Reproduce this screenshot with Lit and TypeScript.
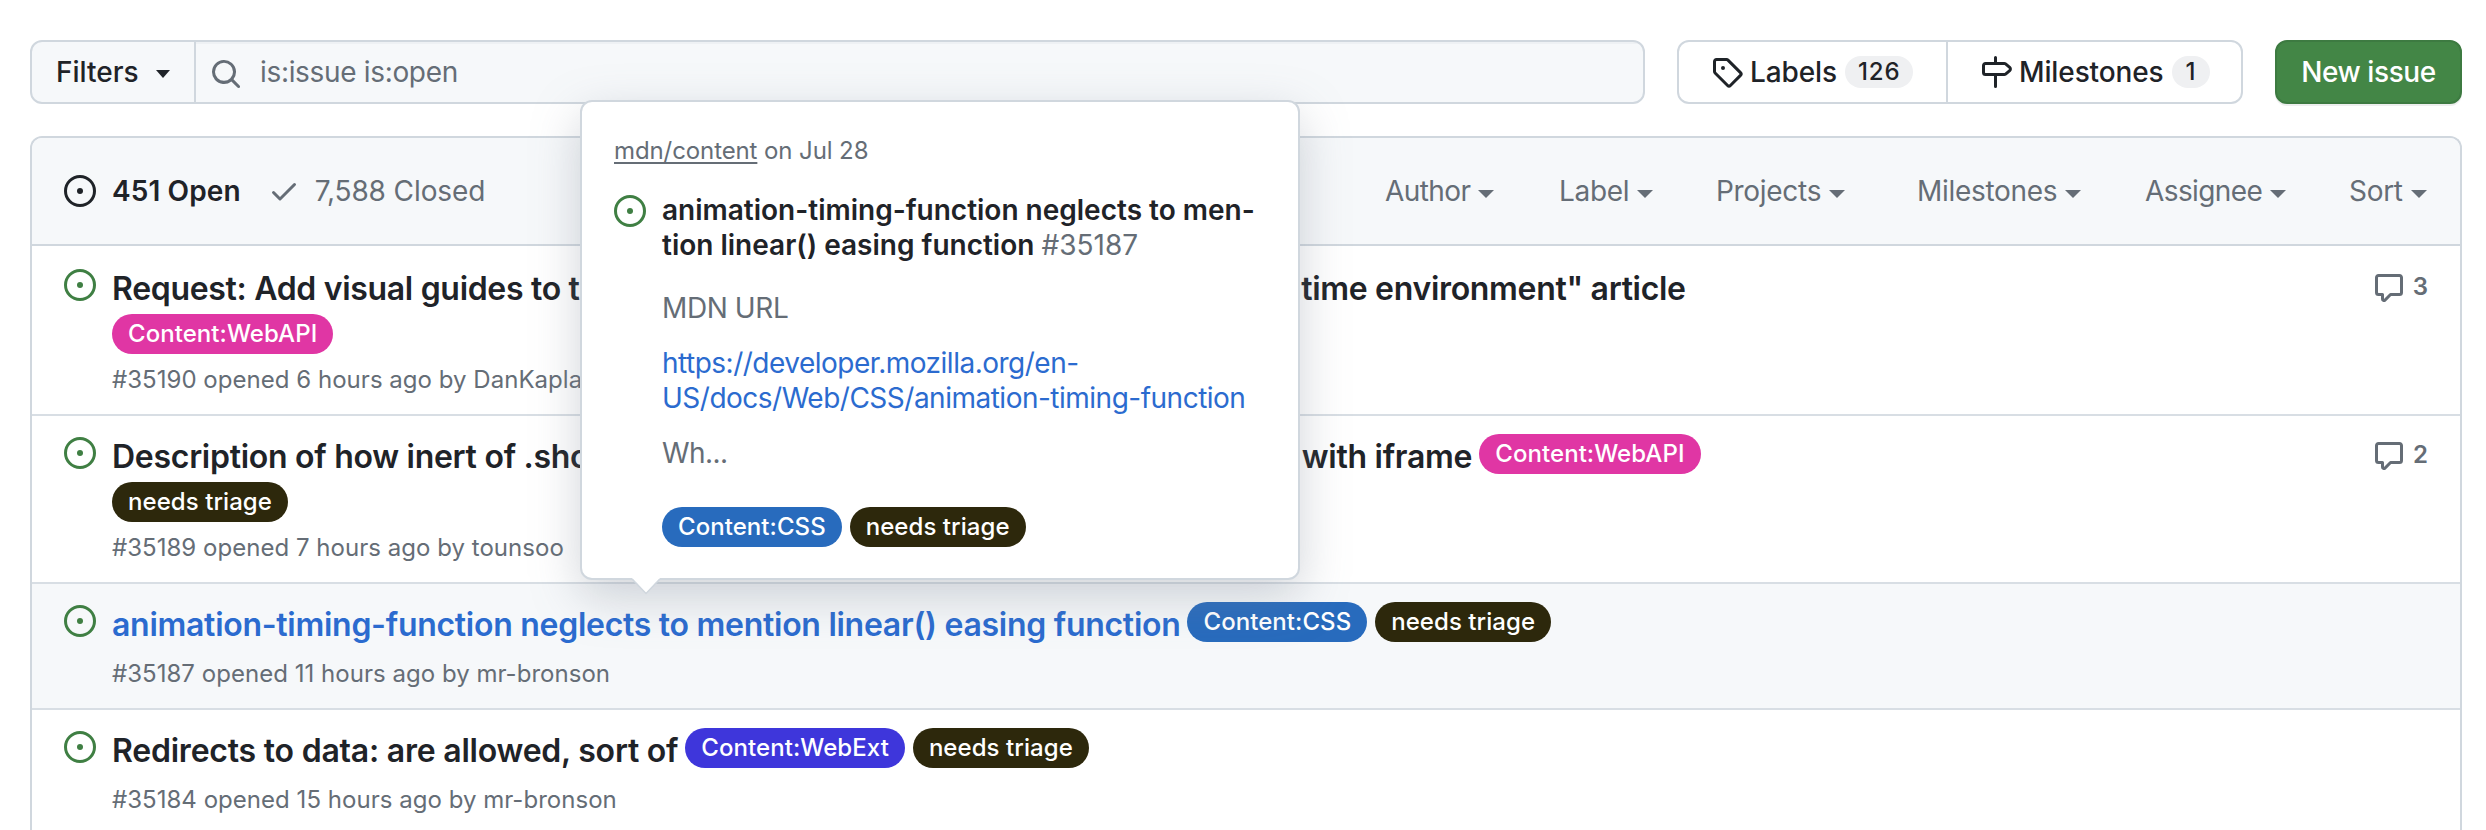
import { LitElement, html, svg, css, nothing } from "lit";
import { customElement, property } from "lit/decorators.js";
import { classMap } from "lit/directives/class-map.js";

const ICONS: Record<string, string[]> = {
  open: [
    "M8 9.5a1.5 1.5 0 1 0 0-3 1.5 1.5 0 0 0 0 3Z",
    "M8 0a8 8 0 1 1 0 16A8 8 0 0 1 8 0ZM1.5 8a6.5 6.5 0 1 0 13 0 6.5 6.5 0 0 0-13 0Z",
  ],
  check: [
    "M13.78 4.22a.75.75 0 0 1 0 1.06l-7.25 7.25a.75.75 0 0 1-1.06 0L2.22 9.28a.751.751 0 0 1 .018-1.042.751.751 0 0 1 1.042-.018L6 10.94l6.72-6.72a.75.75 0 0 1 1.06 0Z",
  ],
  search: [
    "M10.68 11.74a6 6 0 0 1-7.922-8.982 6 6 0 0 1 8.982 7.922l3.04 3.04a.749.749 0 0 1-.326 1.275.749.749 0 0 1-.734-.215ZM11.5 7a4.499 4.499 0 1 0-8.997 0A4.499 4.499 0 0 0 11.5 7Z",
  ],
  tag: [
    "M1 7.775V2.75C1 1.784 1.784 1 2.75 1h5.025c.464 0 .91.184 1.238.513l6.25 6.25a1.75 1.75 0 0 1 0 2.474l-5.026 5.026a1.75 1.75 0 0 1-2.474 0l-6.25-6.25A1.752 1.752 0 0 1 1 7.775Zm1.5 0c0 .066.026.13.073.177l6.25 6.25a.25.25 0 0 0 .354 0l5.025-5.025a.25.25 0 0 0 0-.354l-6.25-6.25a.25.25 0 0 0-.177-.073H2.75a.25.25 0 0 0-.25.25ZM6 5a1 1 0 1 1 0 2 1 1 0 0 1 0-2Z",
  ],
  milestone: [
    "M7.75 0a.75.75 0 0 1 .75.75V3h3.634c.414 0 .814.147 1.13.414l2.07 1.75a1.75 1.75 0 0 1 0 2.672l-2.07 1.75a1.75 1.75 0 0 1-1.13.414H8.5v5.25a.75.75 0 0 1-1.5 0V10H2.75A1.75 1.75 0 0 1 1 8.25v-3.5C1 3.784 1.784 3 2.75 3H7V.75A.75.75 0 0 1 7.75 0Zm4.384 8.5a.25.25 0 0 0 .161-.06l2.07-1.75a.248.248 0 0 0 0-.38l-2.07-1.75a.25.25 0 0 0-.161-.06H2.75a.25.25 0 0 0-.25.25v3.5c0 .138.112.25.25.25h9.384Z",
  ],
  comment: [
    "M1 2.75C1 1.784 1.784 1 2.75 1h10.5c.966 0 1.75.784 1.75 1.75v7.5A1.75 1.75 0 0 1 13.25 12H9.06l-2.573 2.573A1.458 1.458 0 0 1 4 13.543V12H2.75A1.75 1.75 0 0 1 1 10.25Zm1.75-.25a.25.25 0 0 0-.25.25v7.5c0 .138.112.25.25.25h2a.75.75 0 0 1 .75.75v2.19l2.72-2.72a.749.749 0 0 1 .53-.22h4.5a.25.25 0 0 0 .25-.25v-7.5a.25.25 0 0 0-.25-.25Z",
  ],
};

const icon = (name: string) => html`<svg class="icon icon-${name}" viewBox="0 0 16 16" width="32" height="32" fill="currentColor">${ICONS[name].map((d) => svg`<path d=${d}></path>`)}</svg>`;

type Label = "Content:WebAPI" | "Content:CSS" | "Content:WebExt" | "needs triage";
const LABEL_CLASS: Record<Label, string> = {
  "Content:WebAPI": "webapi",
  "Content:CSS": "css",
  "Content:WebExt": "webext",
  "needs triage": "triage",
};

interface Issue {
  title: string;
  lead: Label[];
  wrapped: Label[];
  meta: string;
  comments?: number;
  hovered?: boolean;
  spacing?: string;
}

const ISSUES: Issue[] = [
  {
    title: 'Request: Add visual guides to the "In depth: Microtasks and the JavaScript runtime environment" article',
    lead: [],
    wrapped: ["Content:WebAPI"],
    meta: "#35190 opened 6 hours ago by DanKaplanSES",
    comments: 3,
    spacing: "snug",
  },
  {
    title: "Description of how inert of .showModal() effects elements is weird when used with iframe",
    lead: ["Content:WebAPI"],
    wrapped: ["needs triage"],
    meta: "#35189 opened 7 hours ago by tounsoo",
    comments: 2,
  },
  {
    title: "animation-timing-function neglects to mention linear() easing function",
    lead: ["Content:CSS", "needs triage"],
    wrapped: [],
    meta: "#35187 opened 11 hours ago by mr-bronson",
    hovered: true,
  },
  {
    title: "Redirects to data: are allowed, sort of",
    lead: ["Content:WebExt", "needs triage"],
    wrapped: [],
    meta: "#35184 opened 15 hours ago by mr-bronson",
    spacing: "loose",
  },
];

const base = css`
  * { box-sizing: border-box; }
  .icon { display: block; flex: none; }
  .icon-open { color: #3f7f43; }
  .labels { display: flex; gap: 8px; }
`;

@customElement("issue-label")
export class IssueLabel extends LitElement {
  @property() name: Label = "needs triage";
  static styles = css`
    :host { display: block; flex: none; }
    .pill {
      height: 40px; padding: 0 16px; border-radius: 20px; color: #fff;
      font-size: 24px; font-weight: 500; line-height: 40px; letter-spacing: 0.06px; white-space: nowrap;
    }
    .webapi { background: #e036a4; }
    .css { background: #286bbd; }
    .webext { background: #3e36db; }
    .triage { background: #2d280c; }
  `;
  render() {
    return html`<div class="pill ${LABEL_CLASS[this.name]}">${this.name}</div>`;
  }
}

@customElement("issue-row")
export class IssueRow extends LitElement {
  @property({ attribute: false }) issue!: Issue;
  static styles = [base, css`
    :host { display: block; }
    .row {
      display: grid; grid-template-columns: 32px 1fr auto; column-gap: 16px;
      padding: 18px 32px 16px 32px; background: #fff;
    }
    .row.hovered { background: #f6f8fa; }
    .row > .icon { margin-top: 3px; }
    .line { display: flex; height: 40px; gap: 7px; }
    .title {
      font-size: 32px; font-weight: 600; line-height: 45px; letter-spacing: -0.28px;
      color: #1f2328; white-space: nowrap;
    }
    .title.snug { letter-spacing: -0.315px; }
    .title.loose { letter-spacing: -0.22px; }
    .hovered .title { color: #2b6bcf; }
    .wrapped { margin-top: 8px; }
    .meta { margin-top: 14px; font-size: 24px; line-height: 36px; letter-spacing: 0.03px; color: #656d76; }
    .wrapped + .meta { margin-top: 8px; }
    .comments { display: flex; gap: 8px; height: 32px; margin-top: 6px; color: #656d76; font-size: 24px; font-weight: 600; line-height: 30px; }
  `];
  render() {
    const i = this.issue;
    return html`
      <div class=${classMap({ row: true, hovered: !!i.hovered })}>
        ${icon("open")}
        <div>
          <div class="line">
            <div class="title ${i.spacing ?? ""}">${i.title}</div>
            <div class="labels">${i.lead.map((l) => html`<issue-label .name=${l}></issue-label>`)}</div>
          </div>
          ${i.wrapped.length
            ? html`<div class="labels wrapped">${i.wrapped.map((l) => html`<issue-label .name=${l}></issue-label>`)}</div>`
            : nothing}
          <div class="meta">${i.meta}</div>
        </div>
        ${i.comments ? html`<div class="comments">${icon("comment")}<span>${i.comments}</span></div>` : nothing}
      </div>`;
  }
}

@customElement("issue-hovercard")
export class IssueHovercard extends LitElement {
  static styles = [base, css`
    :host { display: block; }
    .card {
      position: relative; width: 720px; padding: 31px 32px; background: #fff;
      border: 2px solid #d0d7de; border-radius: 12px;
      box-shadow: 0 16px 48px rgba(120, 130, 145, 0.34);
      color: #656d76; font-size: 28px; line-height: 35px;
    }
    .repo { font-size: 24px; line-height: 36px; letter-spacing: -0.1px; }
    .repo a { text-decoration: underline; text-decoration-thickness: 2px; text-underline-offset: 3px; }
    .body { display: grid; grid-template-columns: 32px 1fr; column-gap: 16px; margin-top: 24px; }
    .body > .icon { margin-top: 2px; }
    .title { font-weight: 600; color: #1f2328; white-space: nowrap; }
    .number { font-weight: 400; color: #656d76; }
    .heading { margin-top: 28px; letter-spacing: -0.4px; }
    .url { margin-top: 20px; color: #2b6bcf; letter-spacing: -0.5px; white-space: nowrap; }
    .excerpt { margin-top: 20px; letter-spacing: -0.6px; }
    .labels { margin-top: 36px; }
    .caret { position: absolute; left: 50px; top: 100%; }
  `];
  render() {
    return html`
      <div class="card">
        <div class="repo"><a>mdn/content</a> on Jul 28</div>
        <div class="body">
          ${icon("open")}
          <div>
            <div class="title">animation-timing-function neglects to men-<br />tion linear() easing function <span class="number">#35187</span></div>
            <div class="heading">MDN URL</div>
            <div class="url">https://developer.mozilla.org/en-<br />US/docs/Web/CSS/animation-timing-function</div>
            <div class="excerpt">Wh...</div>
            <div class="labels">
              <issue-label .name=${"Content:CSS"}></issue-label>
              <issue-label .name=${"needs triage"}></issue-label>
            </div>
          </div>
        </div>
        <svg class="caret" width="28" height="17" viewBox="0 0 28 17">
          <path d="M0 0h28L14 15Z" fill="#fff"></path>
          <path d="M0.5 1.5L14 15.5L27.5 1.5" fill="none" stroke="#d0d7de" stroke-width="1.5"></path>
        </svg>
      </div>`;
  }
}

@customElement("app-root")
export class AppRoot extends LitElement {
  static styles = [base, css`
    :host {
      display: block; height: 830px; overflow: hidden; background: #fff; color: #1f2328;
      font-family: Inter, "Liberation Sans", sans-serif; font-size: 28px; line-height: 42px;
    }
    .page { position: relative; padding: 40px 24px 0 30px; }
    .toolbar { display: flex; gap: 32px; height: 64px; font-weight: 500; }
    .search {
      flex: 1; display: flex; align-items: center; overflow: hidden;
      border: 2px solid #d0d7de; border-radius: 12px; background: #f6f8fa;
    }
    .filters { display: flex; align-items: center; gap: 17px; width: 164px; height: 100%; padding-left: 24px; border-right: 2px solid #d0d7de; }
    .query {
      flex: 1; display: flex; align-items: center; gap: 18px; height: 100%; padding-left: 14px;
      font-weight: 400; color: #656d76; letter-spacing: -0.33px; box-shadow: inset 0 2px 0 rgba(208, 215, 222, 0.2);
    }
    .query .icon { margin-top: 4px; }
    .caret { width: 0; height: 0; border: 8px solid transparent; border-top-color: currentColor; border-bottom: 0; }
    .filters .caret { border-width: 8px 7.5px 0; margin-top: 4px; }
    .subnav { display: flex; width: 566px; border: 2px solid #d0d7de; border-radius: 12px; letter-spacing: -0.12px; }
    .subnav a { display: flex; align-items: center; gap: 7px; padding-left: 32px; }
    .subnav a:first-child { width: 269px; border-right: 2px solid #d0d7de; }
    .counter {
      margin-left: 1px; height: 32px; min-width: 38px; padding: 0 13px; border-radius: 16px; background: #eff0f2;
      font-size: 24px; line-height: 32px; letter-spacing: 0.9px; text-align: center;
    }
    .counter.one { padding: 0 12px; letter-spacing: 0; }
    .new {
      display: flex; align-items: center; justify-content: center; width: 187px; border-radius: 12px;
      border: 2px solid #3d7a41; background: #438646; color: #fff; letter-spacing: -0.42px;
      box-shadow: 0 2px 0 rgba(31, 35, 40, 0.08);
    }
    .table { margin-top: 32px; border: 2px solid #d0d7de; border-radius: 12px 12px 0 0; border-bottom: 0; }
    .head {
      display: flex; align-items: center; height: 106px; padding: 0 32px; background: #f6f8fa;
      border-radius: 10px 10px 0 0; color: #656d76;
    }
    .open { display: flex; align-items: center; gap: 16px; color: #1f2328; font-weight: 600; letter-spacing: 0.1px; }
    .open .icon { color: #1f2328; }
    .closed { display: flex; align-items: center; gap: 15px; margin-left: 27px; letter-spacing: -0.1px; }
    .menus { display: grid; grid-template-columns: 174px 157px 201px 228px 204px 79px; margin-left: auto; }
    .menu { display: flex; align-items: center; gap: 8px; letter-spacing: -0.3px; }
    .menu.tight { letter-spacing: -0.6px; }
    .menu .caret { margin-top: 6px; }
    issue-row { border-top: 2px solid #d8dee4; }
    issue-row.first { border-top-color: #d0d7de; padding-top: 2px; }
    issue-hovercard { position: absolute; left: 580px; top: 100px; }
  `];
  render() {
    return html`
      <div class="page">
        <div class="toolbar">
          <div class="search">
            <div class="filters"><span>Filters</span><span class="caret"></span></div>
            <div class="query">${icon("search")}<span>is:issue is:open</span></div>
          </div>
          <div class="subnav">
            <a>${icon("tag")}<span>Labels</span><span class="counter">126</span></a>
            <a>${icon("milestone")}<span>Milestones</span><span class="counter one">1</span></a>
          </div>
          <div class="new">New issue</div>
        </div>
        <div class="table">
          <div class="head">
            <div class="open">${icon("open")}<span>451 Open</span></div>
            <div class="closed">${icon("check")}<span>7,588 Closed</span></div>
            <div class="menus">
              ${["Author", "Label", "Projects", "Milestones", "Assignee", "Sort"].map(
                (m) => html`<div class=${classMap({ menu: true, tight: m === "Assignee" || m === "Author" })}><span>${m}</span><span class="caret"></span></div>`
              )}
            </div>
          </div>
          ${ISSUES.map((i, n) => html`<issue-row class=${n === 0 ? "first" : ""} .issue=${i}></issue-row>`)}
        </div>
        <issue-hovercard></issue-hovercard>
      </div>`;
  }
}
